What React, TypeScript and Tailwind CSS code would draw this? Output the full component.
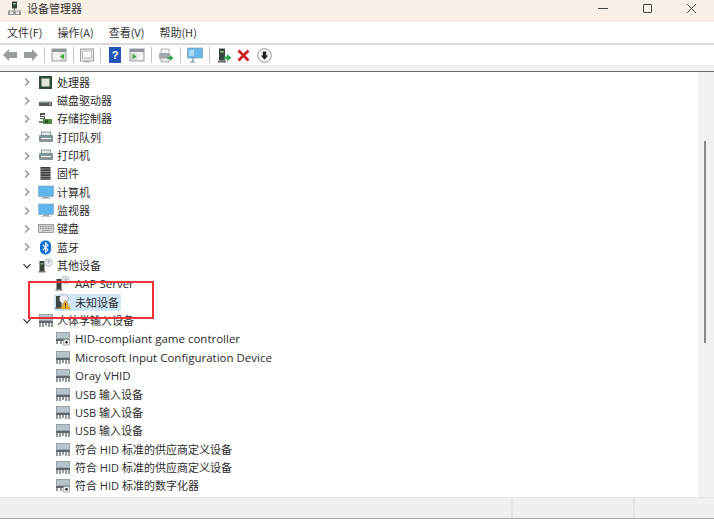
import { ReactNode } from 'react';

const FONT = '"Noto Sans CJK SC", sans-serif';
const LATIN = '"Open Sans", "Noto Sans CJK SC", sans-serif';

function Chevron({ open }: { open?: boolean }) {
  return (
    <svg width="10" height="10" viewBox="0 0 10 10" fill="none" strokeWidth="1.200" stroke={open ? '#333' : '#8a8a8a'}>
      {open ? <path d="M1.500 3.200 5 6.800 8.500 3.200" /> : <path d="M3.200 1.500 6.800 5 3.200 8.500" />}
    </svg>
  );
}

function Cpu() {
  return (
    <svg width="15" height="15" viewBox="0 0 15 15">
      <rect x="1" y="1" width="13" height="13" fill="#2f4a34" />
      <rect x="3.500" y="3.500" width="8" height="8" fill="#dfe7d8" />
    </svg>
  );
}
function Disk() {
  return (
    <svg width="15" height="15" viewBox="0 0 15 15">
      <rect x="1" y="9" width="13" height="4" fill="#55595e" />
      <rect x="2" y="8" width="11" height="1.500" fill="#c4c7ca" />
      <rect x="11" y="10.500" width="2" height="1" fill="#c8e0c8" />
    </svg>
  );
}
function Storage() {
  return (
    <svg width="15" height="15" viewBox="0 0 15 15">
      <path d="M2 2h5v2H3v1h4v3H2V7h4V6H2z" fill="#555" />
      <rect x="5" y="8" width="9" height="5" fill="#4d8a3f" />
      <rect x="7" y="9.500" width="3" height="2" fill="#1f3f1c" />
      <rect x="1" y="10" width="4" height="2" fill="#777" />
    </svg>
  );
}
function Printer() {
  return (
    <svg width="16" height="15" viewBox="0 0 16 15">
      <rect x="3.500" y="2" width="9" height="4" fill="#e8e8e8" stroke="#6f8a8a" strokeWidth="0.800" />
      <rect x="1" y="5" width="14" height="7" rx="1" fill="#7f9496" />
      <rect x="3" y="8" width="10" height="3" fill="#f4f4f4" />
      <rect x="3" y="9.500" width="10" height="1" fill="#333" />
    </svg>
  );
}
function Firmware() {
  return (
    <svg width="15" height="15" viewBox="0 0 15 15">
      <rect x="2.500" y="1" width="10" height="13" fill="#3e3e3e" />
      <path d="M2 3h11M2 5.500h11M2 8h11M2 10.500h11M2 13h11" stroke="#a5a5a5" strokeWidth="0.800" />
    </svg>
  );
}
function Monitor() {
  return (
    <svg width="16" height="15" viewBox="0 0 16 15">
      <rect x="0.500" y="1" width="15" height="10.500" fill="#5fb6ee" stroke="#8aa7bd" strokeWidth="0.700" />
      <rect x="5" y="11.500" width="6" height="1.500" fill="#9aa5ad" />
      <rect x="3" y="13" width="10" height="1" fill="#c3c9ce" />
    </svg>
  );
}
function Keyboard() {
  return (
    <svg width="16" height="15" viewBox="0 0 16 15">
      <rect x="0.500" y="3.500" width="15" height="8" fill="#d5d5d5" stroke="#8c8c8c" strokeWidth="0.800" />
      <path d="M2 5.500h12M2 7.500h12M4 9.500h8" stroke="#777" strokeWidth="0.900" strokeDasharray="1 0.600" />
    </svg>
  );
}
function Bluetooth() {
  return (
    <svg width="15" height="15" viewBox="0 0 15 15">
      <rect x="2" y="0.500" width="11" height="14" rx="5" fill="#0a6fd8" />
      <path d="M4.800 4.800 10 9.800 7.500 12.200V2.800L10 5.200 4.800 10.200" fill="none" stroke="#fff" strokeWidth="1.100" />
    </svg>
  );
}
function Unknown({ small }: { small?: boolean }) {
  return (
    <svg width="15" height="15" viewBox="0 0 15 15">
      <rect x="1.500" y="3" width="5" height="11" fill="#39443c" />
      <rect x="2.500" y="5" width="3" height="1.500" fill="#7fb07f" />
      <rect x="0.500" y="13" width="7" height="1.500" fill="#777" />
      <circle cx="10.500" cy={small ? 4 : 4.500} r="3.800" fill="#eef1f5" stroke="#9aa4b2" strokeWidth="0.700" />
      <path d="M9.400 3.400c.3-1 2.200-1 2.200.2 0 .8-1.100.9-1.100 1.800" fill="none" stroke="#5a6a85" strokeWidth="0.800" />
    </svg>
  );
}
function Warning() {
  return (
    <svg width="16" height="16" viewBox="0 0 16 16">
      <rect x="1" y="2" width="5.500" height="12" fill="#39443c" />
      <rect x="0" y="13.500" width="7" height="1.500" fill="#777" />
      <circle cx="9" cy="5" r="4.500" fill="#eef1f5" stroke="#9aa4b2" strokeWidth="0.700" />
      <path d="M10.500 6 15.500 15H5.500z" fill="#f0b429" stroke="#a8781a" strokeWidth="0.500" />
      <rect x="10.100" y="9" width="0.900" height="3.200" fill="#222" />
      <rect x="10.100" y="12.800" width="0.900" height="1" fill="#222" />
    </svg>
  );
}
function Hid({ game }: { game?: boolean }) {
  return (
    <svg width="16" height="15" viewBox="0 0 16 15">
      <rect x="1.500" y="1.500" width="13" height="6" fill="#b8c4cc" stroke="#7e8a92" strokeWidth="0.700" />
      <path d="M1 8h14v2H1z" fill="#5f686e" />
      {game ? (
        <>
          <path d="M2 10v3M6 10v3" stroke="#555" strokeWidth="1.200" />
          <rect x="8.500" y="8.500" width="6" height="5.500" fill="#eee" stroke="#888" strokeWidth="0.600" />
          <circle cx="11.500" cy="11.200" r="1.200" fill="#222" />
        </>
      ) : (
        <path d="M2 10v4M5 10v4M8 10v3M11 10v4M14 10v4" stroke="#4d565c" strokeWidth="1.200" />
      )}
    </svg>
  );
}

const topRows: [string, ReactNode][] = [
  ['处理器', <Cpu />],
  ['磁盘驱动器', <Disk />],
  ['存储控制器', <Storage />],
  ['打印队列', <Printer />],
  ['打印机', <Printer />],
  ['固件', <Firmware />],
  ['计算机', <Monitor />],
  ['监视器', <Monitor />],
  ['键盘', <Keyboard />],
  ['蓝牙', <Bluetooth />],
];

const hidRows: [string, boolean, boolean][] = [
  ['HID-compliant game controller', true, true],
  ['Microsoft Input Configuration Device', false, true],
  ['Oray VHID', false, true],
  ['USB 输入设备', false, false],
  ['USB 输入设备', false, false],
  ['USB 输入设备', false, false],
  ['符合 HID 标准的供应商定义设备', false, false],
  ['符合 HID 标准的供应商定义设备', false, false],
  ['符合 HID 标准的数字化器', true, false],
];

function Row({ icon, label, chevron, open, child, selected, latin }: { icon: ReactNode; label: string; chevron?: boolean; open?: boolean; child?: boolean; selected?: boolean; latin?: boolean }) {
  return (
    <div className={`flex h-[18.35px] shrink-0 items-center ${child ? 'pl-[54px]' : 'pl-[22px]'}`}>
      {!child && (
        <span className="flex w-[15px] shrink-0 items-center">{chevron && <Chevron open={open} />}</span>
      )}
      <div className={`flex h-[17px] items-center rounded-[2px] pr-[1px] ${selected ? 'bg-[#cfe7f9]' : ''}`}>
        <span className="flex w-[17px] shrink-0 items-center justify-center">{icon}</span>
        <span
          className={`whitespace-nowrap px-[1px] leading-[17px] text-[#2c2c2c] ${child ? 'ml-[3px]' : 'ml-[2px]'} ${latin ? 'text-[11.5px]' : 'text-[11px]'}`}
          style={{ fontFamily: LATIN }}
        >
          {label}
        </span>
      </div>
    </div>
  );
}

function ToolSep() {
  return <span className="mx-[6px] h-[16px] w-px bg-[#c4c4c4]" />;
}

export default function App() {
  return (
    <div className="relative flex h-[519px] w-[714px] flex-col overflow-hidden bg-white" style={{ fontFamily: FONT }}>
      {/* title bar */}
      <div className="flex h-[22px] shrink-0 items-center bg-[#f8f0e7] pb-[6px] pl-[7px]">
        <svg width="15" height="15" viewBox="0 0 15 15">
          <rect x="5" y="0.500" width="5" height="7" fill="#39443c" />
          <rect x="6" y="2" width="3" height="1.500" fill="#8fb78f" />
          <rect x="7" y="7.500" width="1" height="2" fill="#555" />
          <rect x="1" y="9.500" width="13" height="4.500" fill="#9a9a9a" />
          <rect x="3" y="10.500" width="3" height="2.500" fill="#e8e8e8" />
          <rect x="9" y="10.500" width="3" height="2.500" fill="#e8e8e8" />
        </svg>
        <span className="ml-[5px] text-[11px] text-[#333]">设备管理器</span>
        <div className="ml-auto flex items-center">
          <span className="flex w-[45px] justify-center pr-[1px]">
            <span className="h-px w-[10px] bg-[#444]" />
          </span>
          <span className="flex w-[43px] justify-center">
            <span className="h-[9px] w-[9px] rounded-[1px] border border-[#444]" />
          </span>
          <span className="flex w-[45px] justify-center pr-[1px]">
            <svg width="11" height="11" viewBox="0 0 11 11" stroke="#444" strokeWidth="1">
              <path d="M1 1l9 9M10 1l-9 9" />
            </svg>
          </span>
        </div>
      </div>
      {/* menu */}
      <div className="flex h-[21px] shrink-0 items-center gap-[15px] pl-[7px] text-[11px] text-[#333]">
        <span>文件(F)</span>
        <span>操作(A)</span>
        <span>查看(V)</span>
        <span>帮助(H)</span>
      </div>
      <div className="h-[2px] shrink-0 bg-[#d9d9d9]" />
      {/* toolbar */}
      <div className="flex h-[20px] shrink-0 items-center pl-[3px]">
        <svg width="15" height="12" viewBox="0 0 15 12"><path d="M0 6l6-6v3h8v6H6v3z" fill="#9a9e9a" /></svg>
        <svg className="ml-[5px]" width="15" height="12" viewBox="0 0 15 12"><path d="M15 6 9 0v3H1v6h8v3z" fill="#9a9e9a" /></svg>
        <ToolSep />
        <svg width="16" height="14" viewBox="0 0 16 14">
          <rect x="1" y="1" width="14" height="12" fill="#f1f1f1" stroke="#999" />
          <rect x="1" y="1" width="14" height="3" fill="#8f9699" />
          <rect x="9" y="5" width="5" height="7" fill="#cfe3cf" />
          <path d="M13 6v5L9 8.500z" fill="#3fa348" />
        </svg>
        <ToolSep />
        <svg width="14" height="15" viewBox="0 0 14 15">
          <rect x="0.500" y="1" width="13" height="12" fill="#ebebeb" stroke="#a0a0a0" />
          <rect x="2.500" y="3" width="9" height="7" fill="#f8f8f8" stroke="#bbb" />
          <rect x="4" y="13" width="6" height="1.500" fill="#b5b5b5" />
        </svg>
        <ToolSep />
        <span className="ml-[2px] flex h-[16px] w-[12px] items-center justify-center bg-[#2456b8] text-[11px] font-bold leading-none text-white" style={{ fontFamily: '"Liberation Sans", sans-serif' }}>?</span>
        <svg className="ml-[8px]" width="16" height="14" viewBox="0 0 16 14">
          <rect x="1" y="1" width="14" height="12" fill="#f1f1f1" stroke="#999" />
          <rect x="1" y="1" width="14" height="3" fill="#8f9699" />
          <rect x="2" y="5" width="6" height="7" fill="#cfe3cf" />
          <path d="M3.500 6v5l4-2.500z" fill="#3fa348" />
        </svg>
        <ToolSep />
        <svg width="16" height="15" viewBox="0 0 16 15">
          <rect x="3" y="1" width="8" height="5" fill="#f2f2f2" stroke="#999" strokeWidth="0.700" />
          <rect x="1" y="5" width="11" height="6" rx="1" fill="#a5a9ad" />
          <rect x="3" y="10" width="8" height="4" fill="#e9e9e9" stroke="#999" strokeWidth="0.700" />
          <path d="M12 7v2h-2.500v2H12v2l3.500-3z" fill="#2fa84f" />
        </svg>
        <ToolSep />
        <svg width="16" height="16" viewBox="0 0 16 16">
          <rect x="0.500" y="1" width="15" height="10" fill="#6ab7ea" stroke="#7d9db5" strokeWidth="0.700" />
          <rect x="2" y="3" width="5" height="6" fill="#a9d9f5" />
          <path d="M6 11v4M3 15h5" stroke="#6f8ea3" strokeWidth="1.200" />
        </svg>
        <ToolSep />
        <svg className="ml-[1px]" width="15" height="15" viewBox="0 0 15 15">
          <rect x="2" y="0.500" width="6" height="12" fill="#39443c" />
          <rect x="3" y="3" width="4" height="1.500" fill="#8fb78f" />
          <rect x="1" y="12.500" width="8" height="2" fill="#6a6a6a" />
          <path d="M10 6v2.500H7v2.500h3v2.500l4.500-3.700z" fill="#2fa84f" />
        </svg>
        <svg className="ml-[5px]" width="13" height="13" viewBox="0 0 13 13" stroke="#cc1f24" strokeWidth="2.800">
          <path d="M1.500 1.500l10 10M11.500 1.500l-10 10" />
        </svg>
        <svg className="ml-[7px]" width="15" height="15" viewBox="0 0 15 15">
          <circle cx="7.500" cy="7.500" r="6.800" fill="#fafafa" stroke="#7a7a7a" strokeWidth="0.800" />
          <path d="M5.800 3.500h3.400v4h2L7.500 11.800 3.800 7.500h2z" fill="#222" />
        </svg>
      </div>
      <div className="h-[6px] shrink-0 bg-[#f0f0f0]" />
      <div className="h-px shrink-0 bg-[#6e6e6e]" />
      {/* tree + scrollbar */}
      <div className="flex min-h-0 flex-1 bg-white">
        <div className="flex min-w-0 flex-1 flex-col overflow-hidden pt-[1px]">
          {topRows.map(([label, icon]) => (
            <Row key={label} label={label} icon={icon} chevron />
          ))}
          <Row label="其他设备" icon={<Unknown />} chevron open />
          <Row label="AAP Server" icon={<Unknown small />} child latin />
          <Row label="未知设备" icon={<Warning />} child selected />
          <Row label="人体学输入设备" icon={<Hid />} chevron open />
          {hidRows.map(([label, game, latin], i) => (
            <Row key={i} label={label} icon={<Hid game={game} />} child latin={latin} />
          ))}
        </div>
        <div className="flex w-[16px] shrink-0 justify-end bg-[#f1f1f1] pr-[8px]">
          <div className="mt-[69px] h-[202px] w-[2px] bg-[#8a8a8a]" />
        </div>
      </div>
      {/* status bar */}
      <div className="flex h-[21px] shrink-0 border-t border-[#e6e6e6] bg-[#f0f0f0]">
        <div className="flex-1 border-r-2 border-[#e4e4e4]" />
        <div className="w-[122px] border-r-2 border-[#e4e4e4]" />
        <div className="w-[79px]" />
      </div>
      <div className="h-px shrink-0 bg-[#a8a8a8]" />

      {/* red annotation box */}
      <div className="absolute left-[28px] top-[281px] h-[38px] w-[126px] border-[2px] border-[#ee3338]" />
    </div>
  );
}
